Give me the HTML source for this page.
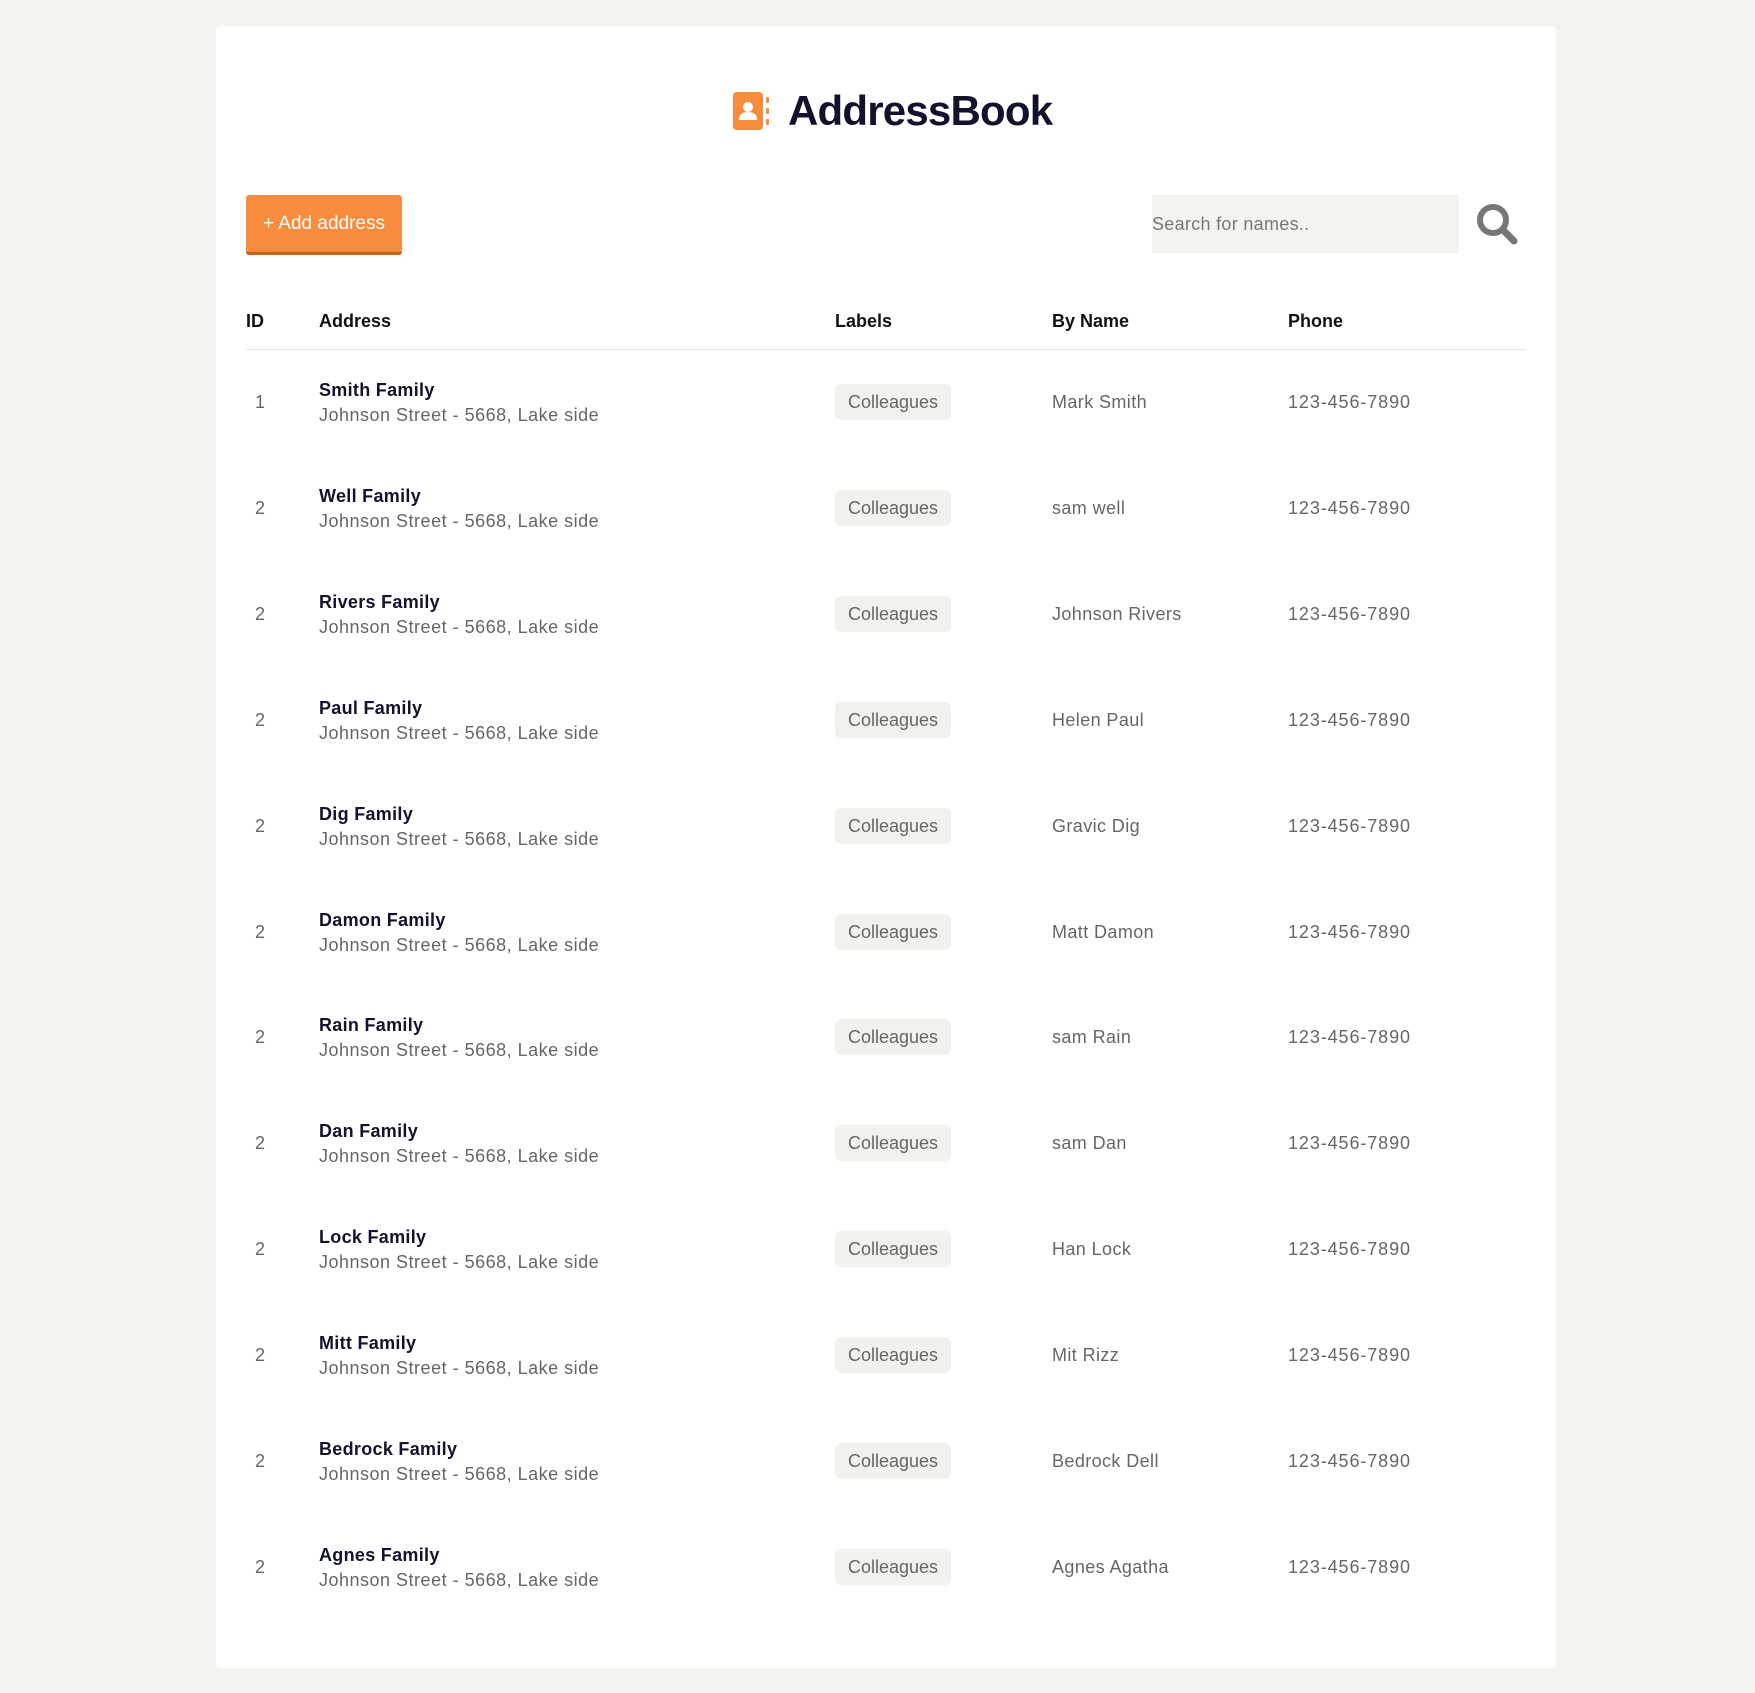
<!DOCTYPE html>
<html><head><style>
body{margin:0;width:1755px;height:1693px;background:#f3f4f0;font-family:"Liberation Sans",sans-serif;position:relative;overflow:hidden}
.card{position:absolute;left:216px;top:26px;width:1340px;height:1642px;background:#fff;border-radius:4px}
.a{position:absolute;white-space:nowrap}
.h{font-size:18px;font-weight:bold;color:#111;top:311px}
.id{left:255px;font-size:18px;color:#666}
.nm{left:319px;font-size:18px;font-weight:bold;color:#12122c;letter-spacing:0.3px}
.ad{left:319px;font-size:18px;color:#666;letter-spacing:0.5px}
.bd{left:835px;width:116px;height:36px;background:#f1f2ee;border-radius:6px;font-size:18px;color:#666;text-align:center;line-height:36px}
.by{left:1052px;font-size:18px;color:#666;letter-spacing:0.4px}
.ph{left:1288px;font-size:18px;color:#666;letter-spacing:0.9px}
</style></head><body>
<div class="card"></div>
<svg class="a" style="left:733px;top:92px" width="38" height="38" viewBox="0 0 38 38">
<rect x="0" y="0" width="30" height="38" rx="4" fill="#f78c3c"/>
<circle cx="15" cy="15" r="5" fill="#fff"/>
<path d="M6 28 q0-8 9-8 q9 0 9 8 z" fill="#fff"/>
<rect x="33" y="5" width="3" height="6" rx="1" fill="#f78c3c"/>
<rect x="33" y="16" width="3" height="6" rx="1" fill="#f78c3c"/>
<rect x="33" y="27" width="3" height="6" rx="1" fill="#f78c3c"/>
</svg>
<div class="a" style="left:788px;top:87px;font-size:42px;font-weight:bold;color:#12122c;letter-spacing:-0.8px">AddressBook</div>
<div class="a" style="left:246px;top:195px;width:156px;height:57px;background:#f78c3c;border-bottom:3px solid #c9621c;border-radius:3px;color:#fff;font-size:19px;line-height:57px;text-align:center">+ Add address</div>
<div class="a" style="left:1152px;top:195px;width:307px;height:58px;background:#f3f4f0;color:#777;font-size:18px;line-height:58px;letter-spacing:0.3px">Search for names..</div>
<svg class="a" style="left:1475px;top:202px" width="44" height="44" viewBox="0 0 44 44"><circle cx="18" cy="18" r="13" fill="none" stroke="#777" stroke-width="6"/><path d="M28 28 L39 39" stroke="#777" stroke-width="7" stroke-linecap="round"/></svg>
<div class="a h" style="left:246px">ID</div>
<div class="a h" style="left:319px">Address</div>
<div class="a h" style="left:835px">Labels</div>
<div class="a h" style="left:1052px">By Name</div>
<div class="a h" style="left:1288px">Phone</div>
<div class="a" style="left:246px;top:349px;width:1280px;height:1px;background:#e8e8e8"></div>
<div id="rows"></div>
<script>
var d=[["1","Smith","Mark Smith"],["2","Well","sam well"],["2","Rivers","Johnson Rivers"],["2","Paul","Helen Paul"],["2","Dig","Gravic Dig"],["2","Damon","Matt Damon"],["2","Rain","sam Rain"],["2","Dan","sam Dan"],["2","Lock","Han Lock"],["2","Mitt","Mit Rizz"],["2","Bedrock","Bedrock Dell"],["2","Agnes","Agnes Agatha"]];
var h="";d.forEach(function(r,i){var c=403+i*105.9;
h+='<div class="a id" style="top:'+(c-11)+'px">'+r[0]+'</div>'+
'<div class="a nm" style="top:'+(c-23)+'px">'+r[1]+' Family</div>'+
'<div class="a ad" style="top:'+(c+2)+'px">Johnson Street - 5668, Lake side</div>'+
'<div class="a bd" style="top:'+(c-19)+'px">Colleagues</div>'+
'<div class="a by" style="top:'+(c-11)+'px">'+r[2]+'</div>'+
'<div class="a ph" style="top:'+(c-11)+'px">123-456-7890</div>';});
document.getElementById("rows").innerHTML=h;
</script>
</body></html>
